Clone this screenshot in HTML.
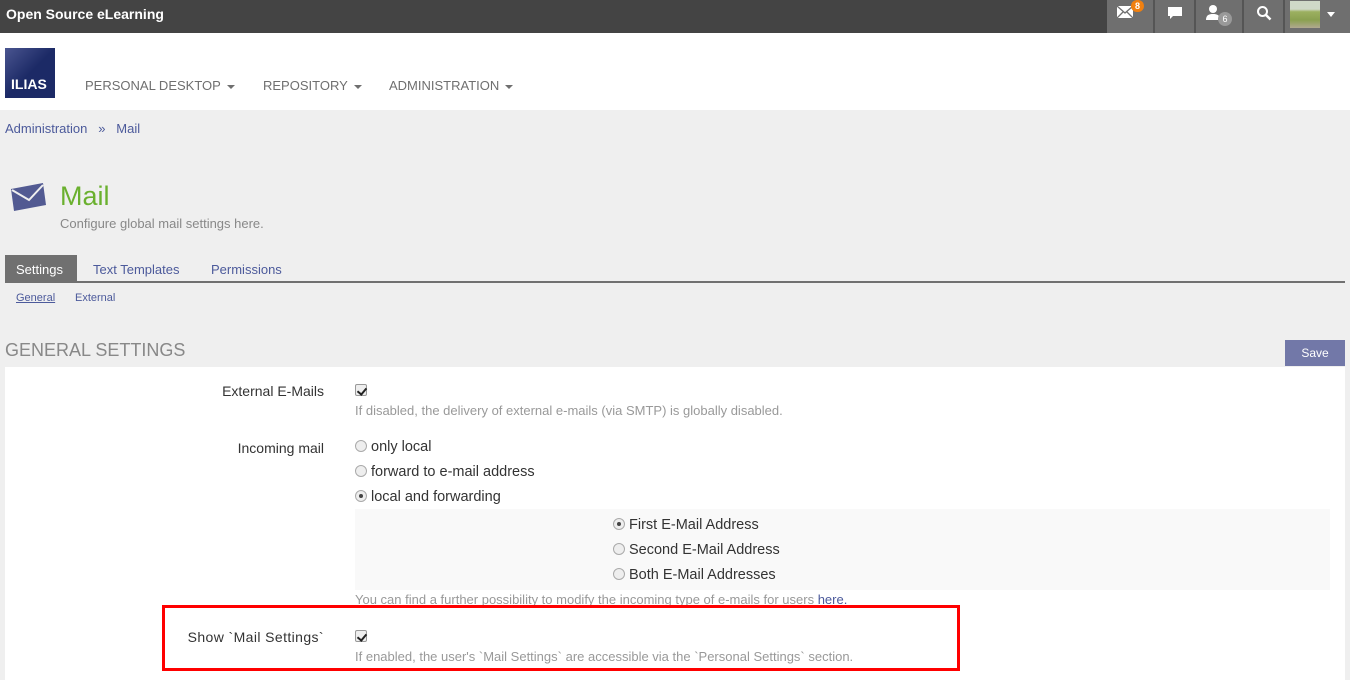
<!DOCTYPE html>
<html><head><style>
*{margin:0;padding:0;box-sizing:border-box}
body{width:1350px;height:680px;overflow:hidden;background:#efefef;font-family:"Liberation Sans",sans-serif;position:relative;color:#333}
.a{position:absolute;white-space:nowrap}
.top{left:0;top:0;width:1350px;height:33px;background:#444}
.cell{top:0;height:33px;background:#6f6f6f;border-right:2px solid #555}
.hdr{left:0;top:33px;width:1350px;height:77px;background:#fff}
.nav{top:78px;font-size:13px;color:#6f6f6f}
.car{display:inline-block;border-top:4px solid #6f6f6f;border-left:4px solid transparent;border-right:4px solid transparent;vertical-align:middle;margin-left:6px}
.lbl{font-size:14px;color:#333;text-align:right;right:1026px}
.opt{font-size:14.5px;color:#333;left:355px}
.help{font-size:13px;color:#999;left:355px}
.cb{display:inline-block;width:12px;height:12px;border:1px solid #999;border-radius:2px;background:#eee;vertical-align:-1px;position:relative}
.cb::after{content:"";position:absolute;left:3px;top:1px;width:4px;height:7px;border:solid #222;border-width:0 2px 2px 0;transform:rotate(40deg)}
.rd{display:inline-block;width:12px;height:12px;border:1px solid #aaa;border-radius:50%;background:#eee;vertical-align:-1px;margin-right:4px;position:relative}
.rd.on::after{content:"";position:absolute;left:3px;top:3px;width:4px;height:4px;border-radius:50%;background:#444}
</style></head><body>
<div class="a top"></div>
<div class="a" style="left:6px;top:6px;color:#fff;font-weight:bold;font-size:14px">Open Source eLearning</div>
<div class="a cell" style="left:1107px;width:48px"></div>
<div class="a cell" style="left:1155px;width:41px"></div>
<div class="a cell" style="left:1196px;width:48px"></div>
<div class="a cell" style="left:1244px;width:41px"></div>
<div class="a cell" style="left:1285px;width:65px;border:none"></div>
<svg class="a" style="left:1117px;top:6px" width="16" height="12" viewBox="0 0 16 12"><rect x="0" y="0" width="16" height="12" fill="#fff"/><path d="M0 0L8 7L16 0M0 12L6 6M16 12L10 6" stroke="#6f6f6f" stroke-width="1.3" fill="none"/></svg>
<div class="a" style="left:1131px;top:0;width:13px;height:12px;border-radius:6px;background:#f08010;color:#fff;font-size:9px;font-weight:bold;text-align:center;line-height:12px">8</div>
<svg class="a" style="left:1167px;top:6px" width="16" height="14" viewBox="0 0 16 14"><path d="M1 1h14v9H6l-3 3v-3H1z" fill="#fff"/></svg>
<svg class="a" style="left:1205px;top:4px" width="16" height="16" viewBox="0 0 16 16"><circle cx="8" cy="5" r="4" fill="#fff"/><path d="M1 16c0-5 3-6 7-6s7 1 7 6z" fill="#fff"/></svg>
<div class="a" style="left:1218px;top:12px;width:14px;height:14px;border-radius:7px;background:#999;color:#fff;font-size:9px;text-align:center;line-height:14px">6</div>
<svg class="a" style="left:1256px;top:5px" width="16" height="16" viewBox="0 0 16 16"><circle cx="6.5" cy="6.5" r="4.5" stroke="#fff" stroke-width="2" fill="none"/><path d="M10 10l4.5 4.5" stroke="#fff" stroke-width="2.5"/></svg>
<div class="a" style="left:1290px;top:1px;width:30px;height:27px;background:linear-gradient(#cfd8c8 0,#cfd8c8 30%,#9cb060 40%,#8aa050 70%,#b0a890 100%)"></div>
<div class="a" style="left:1327px;top:12px;border-top:5px solid #fff;border-left:4px solid transparent;border-right:4px solid transparent"></div>
<div class="a hdr"></div>
<div class="a" style="left:5px;top:48px;width:50px;height:50px;background:linear-gradient(135deg,#4a5590,#1c2a66 50%);color:#fff;font-weight:bold;font-size:14px;padding:28px 0 0 6px">ILIAS</div>
<div class="a nav" style="left:85px">PERSONAL DESKTOP<span class="car"></span></div>
<div class="a nav" style="left:263px">REPOSITORY<span class="car"></span></div>
<div class="a nav" style="left:389px">ADMINISTRATION<span class="car"></span></div>
<div class="a" style="left:5px;top:121px;font-size:13px;color:#4c5a9b">Administration &nbsp;&nbsp;»&nbsp;&nbsp; Mail</div>
<svg class="a" style="left:9px;top:183px" width="38" height="29" viewBox="0 0 38 29"><path d="M2 6L34 0L37 22L5 28z" fill="#525a92"/><path d="M3 7L20 17L34 2" stroke="#efefef" stroke-width="2" fill="none"/></svg>
<div class="a" style="left:60px;top:181px;font-size:27px;color:#6ab02e">Mail</div>
<div class="a" style="left:60px;top:216px;font-size:13px;color:#888">Configure global mail settings here.</div>
<div class="a" style="left:5px;top:255px;width:72px;height:27px;background:#707070;color:#fff;font-size:13px;padding:7px 0 0 11px">Settings</div>
<div class="a" style="left:93px;top:262px;font-size:13px;color:#4c5a9b">Text Templates</div>
<div class="a" style="left:211px;top:262px;font-size:13px;color:#4c5a9b">Permissions</div>
<div class="a" style="left:5px;top:281px;width:1340px;height:2px;background:#707070"></div>
<div class="a" style="left:16px;top:292px;font-size:11px;color:#4c5a9b;text-decoration:underline">General</div>
<div class="a" style="left:75px;top:292px;font-size:11px;color:#4c5a9b">External</div>
<div class="a" style="left:5px;top:340px;font-size:18px;color:#888">GENERAL SETTINGS</div>
<div class="a" style="left:1285px;top:340px;width:60px;height:26px;background:#7278a8;color:#fff;font-size:12px;text-align:center;line-height:26px">Save</div>
<div class="a" style="left:5px;top:367px;width:1340px;height:313px;background:#fff"></div>
<div class="a lbl" style="top:383px">External E-Mails</div>
<div class="a opt" style="top:383px"><span class="cb"></span></div>
<div class="a help" style="top:403px">If disabled, the delivery of external e-mails (via SMTP) is globally disabled.</div>
<div class="a lbl" style="top:440px">Incoming mail</div>
<div class="a opt" style="top:439px"><span class="rd"></span>only local</div>
<div class="a opt" style="top:464px"><span class="rd"></span>forward to e-mail address</div>
<div class="a opt" style="top:489px"><span class="rd on"></span>local and forwarding</div>
<div class="a" style="left:355px;top:509px;width:975px;height:81px;background:#f9f9f9"></div>
<div class="a opt" style="left:613px;top:517px"><span class="rd on"></span>First E-Mail Address</div>
<div class="a opt" style="left:613px;top:542px"><span class="rd"></span>Second E-Mail Address</div>
<div class="a opt" style="left:613px;top:567px"><span class="rd"></span>Both E-Mail Addresses</div>
<div class="a help" style="top:592px">You can find a further possibility to modify the incoming type of e-mails for users <span style="color:#4c5a9b">here.</span></div>
<div class="a lbl" style="top:629px;letter-spacing:0.4px">Show `Mail Settings`</div>
<div class="a opt" style="top:629px"><span class="cb"></span></div>
<div class="a help" style="top:649px">If enabled, the user's `Mail Settings` are accessible via the `Personal Settings` section.</div>
<div class="a" style="left:162px;top:605px;width:798px;height:66px;border:3px solid #f00"></div>
</body></html>
